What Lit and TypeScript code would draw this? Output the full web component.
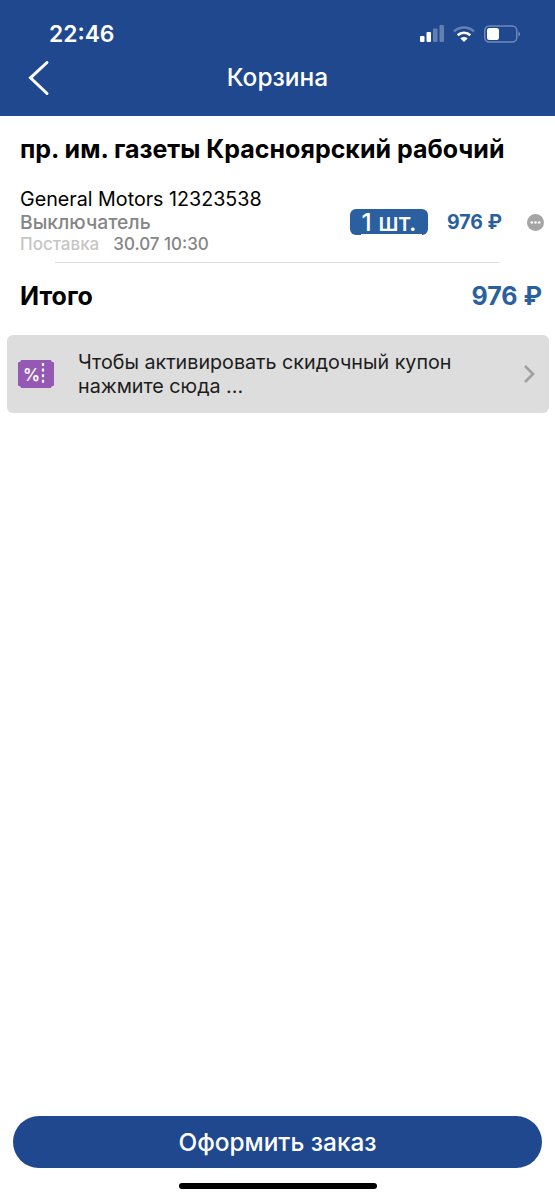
import { LitElement, html, css } from 'lit';
import { customElement } from 'lit/decorators.js';

@customElement('app-root')
export class AppRoot extends LitElement {
  static styles = css`
    :host {
      display: block;
      font-family: Inter, "Noto Sans", sans-serif;
      color: #000;
    }
    .page {
      height: 1200px;
      display: flex;
      flex-direction: column;
      background: #fff;
      overflow: hidden;
    }
    .header {
      height: 116px;
      background: #20488f;
      color: #fff;
      flex: none;
    }
    .status {
      height: 50px;
      padding: 18px 35px 0 49px;
      box-sizing: border-box;
      display: flex;
      justify-content: space-between;
      align-items: center;
    }
    .time {
      font-size: 22.8px;
      font-weight: 600;
      line-height: 26px;
    }
    .status-icons {
      display: flex;
      align-items: center;
      gap: 9px;
    }
    .nav {
      position: relative;
      height: 54px;
      display: flex;
      align-items: center;
      justify-content: center;
      font-size: 24.5px;
      font-weight: 500;
    }
    .back {
      position: absolute;
      left: 27px;
      top: 10px;
    }
    .content {
      flex: 1;
    }
    .address {
      font-size: 25px;
      font-weight: 700;
      line-height: 30px;
      margin: 18px 0 0 20px;
      white-space: nowrap;
    }
    .item {
      display: flex;
      align-items: center;
      margin-top: 24px;
      padding: 0 11px 0 20px;
    }
    .item-info {
      flex: 1;
    }
    .brand {
      font-size: 19.7px;
      line-height: 23px;
      white-space: nowrap;
    }
    .name {
      font-size: 19.3px;
      line-height: 23px;
      color: #858585;
      font-weight: 500;
    }
    .delivery {
      font-size: 17px;
      line-height: 20px;
      color: #858585;
      display: flex;
      gap: 14px;
      font-weight: 500;
    }
    .delivery span {
      color: #c6c6c6;
    }
    .qty {
      position: relative;
      width: 78px;
      height: 26px;
      margin-top: 1px;
      border-radius: 6px;
      background: #2a5fa0;
      color: #fff;
      font-size: 24.5px;
      font-weight: 500;
      line-height: 26px;
      text-align: center;
    }
    .qty::after {
      content: "";
      position: absolute;
      left: 11px;
      right: 6px;
      bottom: 0;
      height: 1px;
      background: #fff;
    }
    .price {
      width: 57px;
      margin-left: 19px;
      margin-top: 2px;
      font-size: 19.5px;
      font-weight: 700;
      color: #2a5fa0;
      white-space: nowrap;
    }
    .more {
      margin-left: 23px;
      margin-top: 2px;
      display: block;
    }
    .divider {
      height: 1px;
      background: #dcdcdc;
      margin: 8px 55px 0 55px;
    }
    .total {
      display: flex;
      justify-content: space-between;
      align-items: center;
      margin-top: 16px;
      padding: 0 13px 0 20px;
      font-size: 25px;
      font-weight: 700;
      line-height: 34px;
    }
    .total .sum {
      color: #2a5fa0;
      font-size: 25px;
    }
    .coupon {
      display: flex;
      align-items: center;
      height: 78px;
      margin: 22px 6px 0 7px;
      background: #dddddd;
      border-radius: 6px;
      box-sizing: border-box;
      padding: 0 14px 0 11px;
    }
    .coupon-text {
      flex: 1;
      margin-left: 24px;
      font-size: 19.7px;
      line-height: 24px;
      color: #1c1c1c;
    }
    .footer {
      flex: none;
      display: flex;
      flex-direction: column;
      align-items: center;
      padding: 0 13px;
    }
    .checkout {
      width: 100%;
      height: 52px;
      border: none;
      border-radius: 26px;
      background: #20488f;
      color: #fff;
      font-family: inherit;
      font-size: 24.4px;
      font-weight: 500;
      padding: 0;
    }
    .home-bar {
      width: 198px;
      height: 6px;
      border-radius: 3px;
      background: #000;
      margin: 15px 0 11px;
    }
  `;

  render() {
    return html`
      <div class="page">
        <div class="header">
          <div class="status">
            <div class="time">22:46</div>
            <div class="status-icons">
              <svg width="24" height="20" viewBox="0 0 24 20">
                <rect x="0" y="12" width="4.500" height="6" rx="1" fill="#fff" />
                <rect x="6.500" y="8" width="4.500" height="10" rx="1" fill="#fff" />
                <rect x="13" y="4.500" width="4.500" height="13.500" rx="1" fill="#fff" opacity=".3" />
                <rect x="19.500" y="1" width="4.500" height="17" rx="1" fill="#fff" opacity=".3" />
              </svg>
              <svg width="22" height="18" viewBox="0 0 22 18">
                <path d="M1 6.500a14.500 14.500 0 0 1 20 0" fill="none" stroke="#fff" stroke-opacity=".3" stroke-width="2.600" />
                <path d="M4.700 10.200a9.200 9.200 0 0 1 12.600 0" fill="none" stroke="#fff" stroke-width="2.600" />
                <path d="M11 17l-3.600-3.600a5.200 5.200 0 0 1 7.200 0z" fill="#fff" />
              </svg>
              <svg width="36" height="18" viewBox="0 0 36 18">
                <rect x=".75" y="1" width="32" height="16" rx="4.500" fill="none" stroke="#fff" stroke-opacity=".35" stroke-width="1.500" />
                <rect x="3" y="3" width="12" height="12" rx="2.500" fill="#fff" />
                <path d="M34.500 6.500c1 .4 1.500 1.300 1.500 2.500s-.5 2.100-1.500 2.500z" fill="#fff" fill-opacity=".4" />
              </svg>
            </div>
          </div>
          <div class="nav">
            <svg class="back" width="24" height="36" viewBox="0 0 24 36">
              <path d="M20 2.500 3.500 17.800 20 33.500" fill="none" stroke="#fff" stroke-width="3" stroke-linecap="round" stroke-linejoin="miter" />
            </svg>
            Корзина
          </div>
        </div>

        <div class="content">
          <div class="address">пр. им. газеты Красноярский рабочий</div>
          <div class="item">
            <div class="item-info">
              <div class="brand">General Motors 12323538</div>
              <div class="name">Выключатель</div>
              <div class="delivery"><span>Поставка</span>30.07 10:30</div>
            </div>
            <div class="qty">1 шт.</div>
            <div class="price">976 ₽</div>
            <svg class="more" width="17" height="17" viewBox="0 0 17 17">
              <circle cx="8.500" cy="8.500" r="8.500" fill="#a5a5a5" />
              <circle cx="4.800" cy="8.500" r="1.300" fill="#fff" />
              <circle cx="8.500" cy="8.500" r="1.300" fill="#fff" />
              <circle cx="12.200" cy="8.500" r="1.300" fill="#fff" />
            </svg>
          </div>
          <div class="divider"></div>
          <div class="total">
            <div>Итого</div>
            <div class="sum">976 ₽</div>
          </div>
          <div class="coupon">
            <svg width="36" height="28" viewBox="0 0 36 28">
              <path d="M3 0h30c0 1.500 1 2 3 2.500v23c-2 .5-3 1-3 2.500H3c0-1.500-1-2-3-2.500v-23C2 2 3 1.500 3 0z" fill="#9558b4" />
              <text x="5" y="20.500" font-size="17" font-weight="600" fill="#fff" font-family="Inter, sans-serif">%</text>
              <path d="M25 3v22" stroke="#fff" stroke-width="2.200" stroke-dasharray="3 2.600" />
            </svg>
            <div class="coupon-text">Чтобы активировать скидочный купон<br />нажмите сюда ...</div>
            <svg width="12" height="20" viewBox="0 0 12 20">
              <path d="M2 2l8 8-8 8" fill="none" stroke="#a0a0a0" stroke-width="2.600" />
            </svg>
          </div>
        </div>

        <div class="footer">
          <button class="checkout">Оформить заказ</button>
          <div class="home-bar"></div>
        </div>
      </div>
    `;
  }
}
